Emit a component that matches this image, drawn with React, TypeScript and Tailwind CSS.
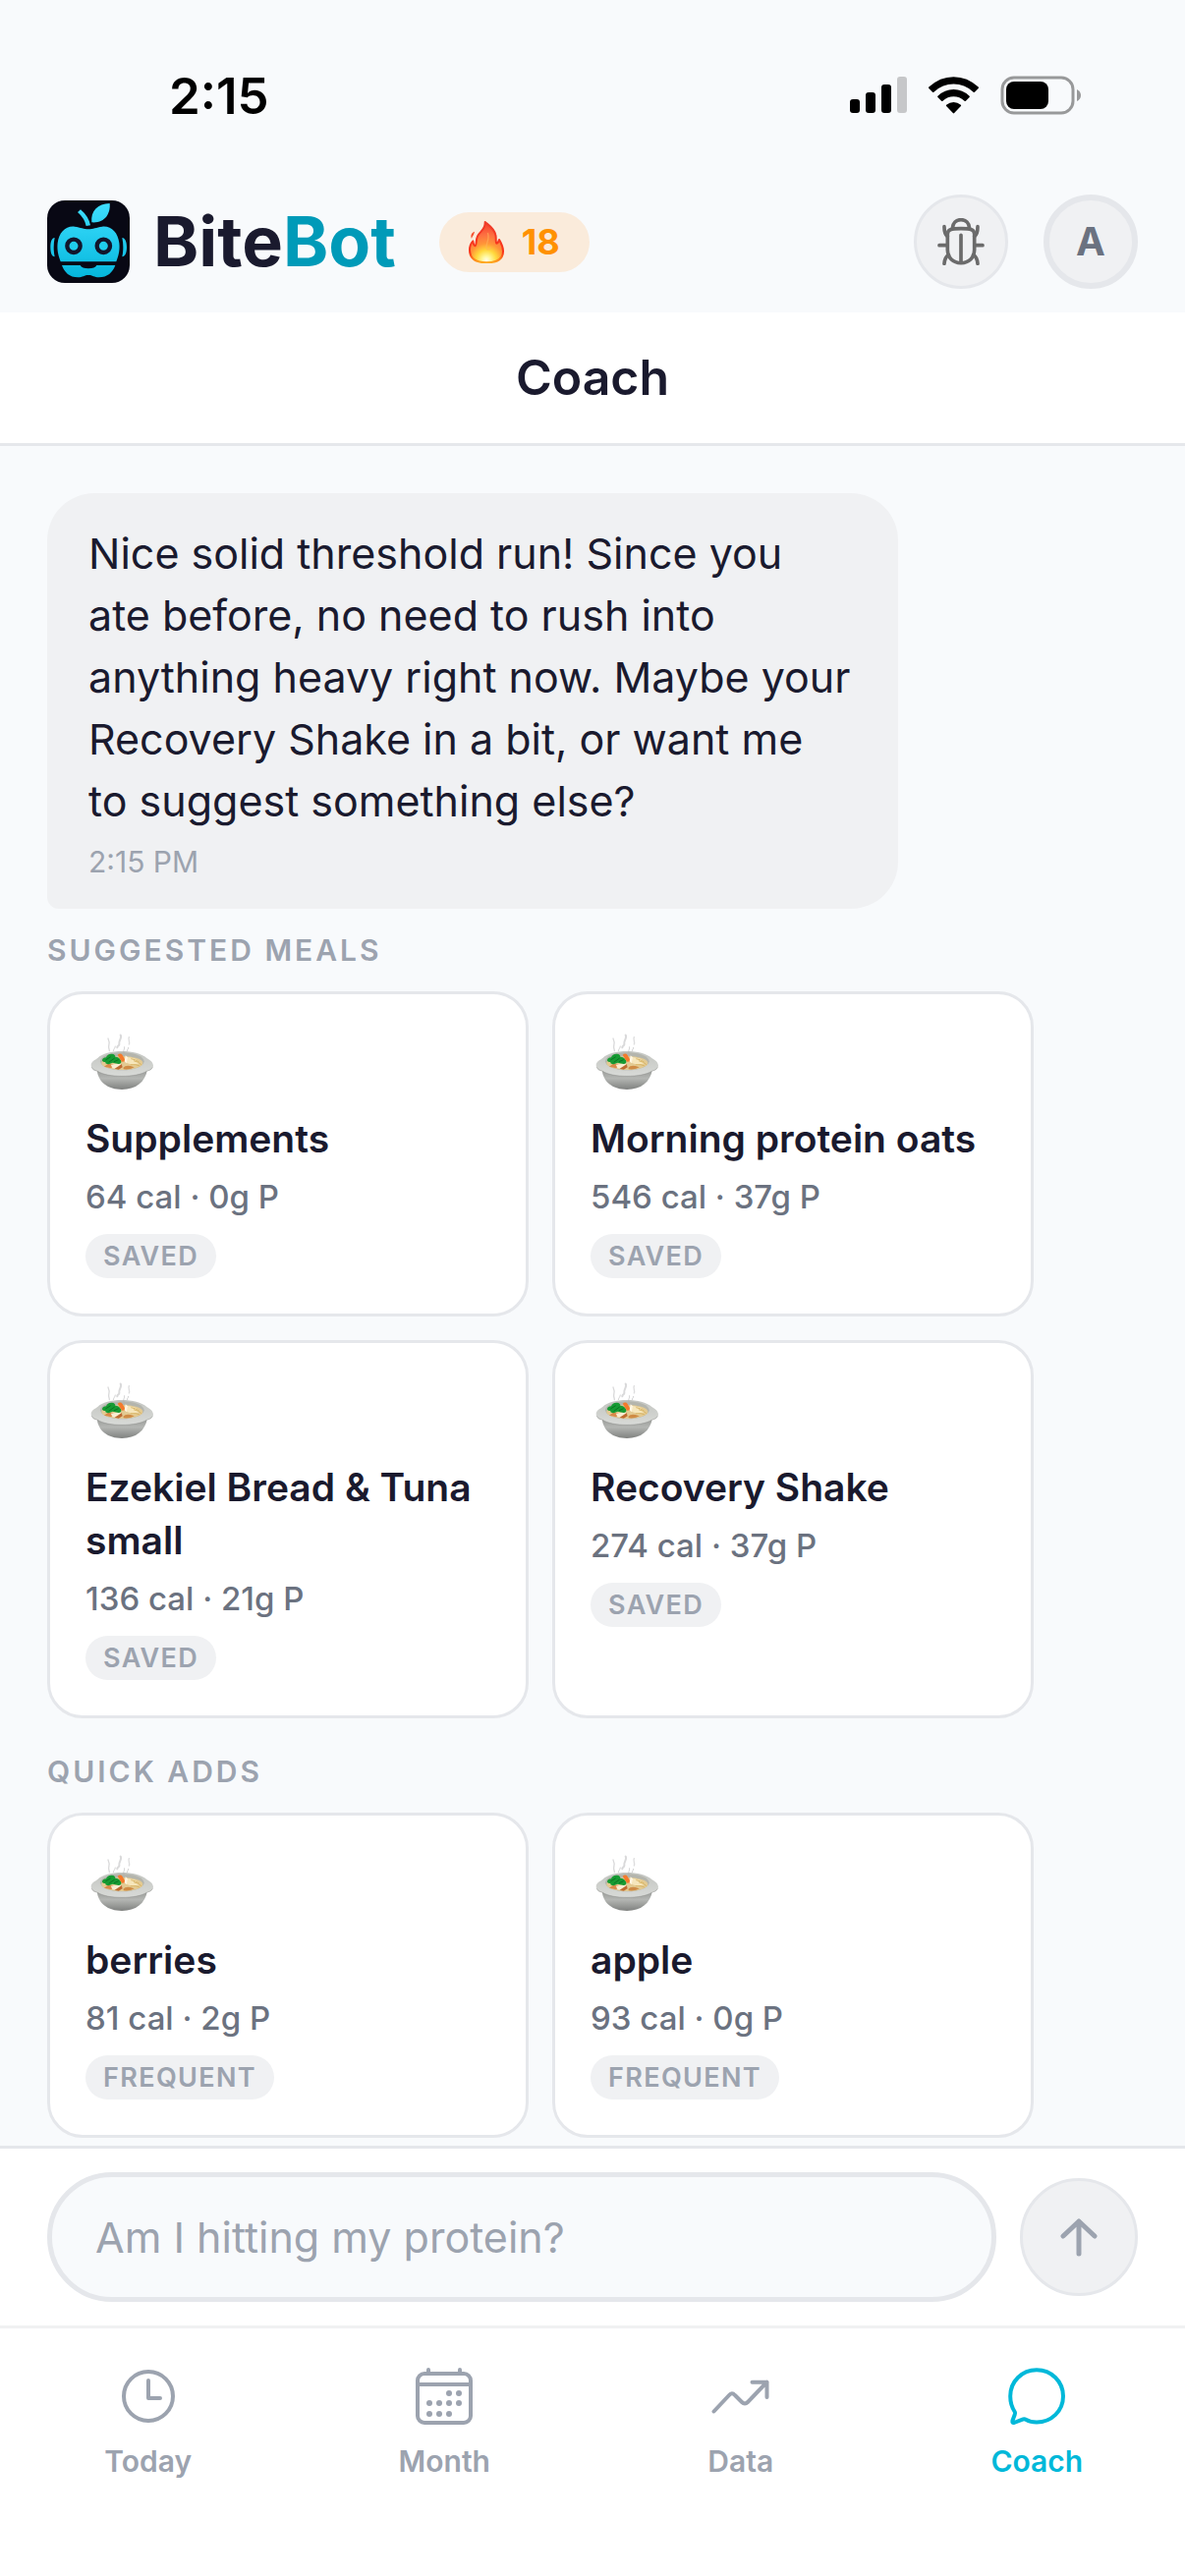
import React from "react";

type Meal = { name: string; cal: number; protein: number; tag: string };

const suggested: Meal[] = [
  { name: "Supplements", cal: 64, protein: 0, tag: "SAVED" },
  { name: "Morning protein oats", cal: 546, protein: 37, tag: "SAVED" },
  { name: "Ezekiel Bread & Tuna small", cal: 136, protein: 21, tag: "SAVED" },
  { name: "Recovery Shake", cal: 274, protein: 37, tag: "SAVED" },
];

const quickAdds: Meal[] = [
  { name: "berries", cal: 81, protein: 2, tag: "FREQUENT" },
  { name: "apple", cal: 93, protein: 0, tag: "FREQUENT" },
];

function StatusBar() {
  return (
    <div className="flex h-[174px] shrink-0 items-start justify-between pt-[72px] pr-[104px] pl-[172px]">
      <span className="text-[51px] leading-[52px] font-semibold text-black">2:15</span>
      <div className="flex h-[50px] items-center gap-[22px]">
        <svg width="58" height="38" viewBox="0 0 58 38" aria-label="Signal">
          <rect x="0" y="23" width="10" height="14" rx="3" />
          <rect x="16" y="16" width="10" height="21" rx="3" />
          <rect x="32" y="8" width="10" height="29" rx="3" />
          <rect x="48" y="0" width="10" height="37" rx="3" fill="#c6c7c9" />
        </svg>
        <svg width="51" height="38" viewBox="427 117 152 112" aria-label="Wi-Fi">
          <path d="M428 148Q461 117 503 117T578 148Q580 150 578 152L567 163Q565 165 563 163Q536 139 503 139T443 163Q441 165 439 163L428 152Q426 150 428 148Z" />
          <path d="M455 175Q476 155 503 155T551 175Q553 177 551 179L540 190Q538 192 536 190Q521 177 503 177T470 190Q468 192 466 190L455 179Q453 177 455 175Z" />
          <path d="M481 202Q491 194 503 194T525 202Q527 204 525 206L505 227Q503 229 501 227L481 206Q479 204 481 202Z" />
        </svg>
        <svg width="84" height="40" viewBox="0 0 84 40" aria-label="Battery">
          <rect x="2" y="2" width="72" height="36" rx="12" fill="none" stroke="#98999a" strokeWidth="3" />
          <rect x="6" y="6" width="43" height="28" rx="8" />
          <path d="M78 14Q82 16 82 20T78 26Z" fill="#98999a" />
        </svg>
      </div>
    </div>
  );
}

function Logo() {
  return (
    <svg width="84" height="84" viewBox="12 12 252 252" className="shrink-0" aria-hidden="true">
      <defs>
        <linearGradient id="apple" x1="0" y1="20" x2="0" y2="250" gradientUnits="userSpaceOnUse">
          <stop offset="0" stopColor="#3fdfff" />
          <stop offset="1" stopColor="#04b6dc" />
        </linearGradient>
      </defs>
      <rect x="12" y="12" width="252" height="252" rx="54" fill="#080814" />
      <g fill="url(#apple)">
        <path d="M105 48L114 40Q138 60 144 88L131 90Q126 66 105 48Z" />
        <path d="M203 21C206 52 188 82 148 79C144 44 166 22 203 21Z" />
        <path d="M53 199C44 175 42 160 44 142C48 110 68 89 96 92C114 94 124 100 138 100C152 100 162 94 180 92C208 89 228 110 232 142C234 160 232 175 223 199Z" />
        <path d="M57 210H113Q118 220 138 220T163 210H220C212 232 196 247 170 247C156 247 150 240 138 240S120 247 106 247C80 247 65 232 57 210Z" />
        <path d="M35 126C26 127 22 138 22 155S26 183 35 184C31 165 31 145 35 126Z" />
        <path d="M241 126C250 127 255 138 255 155S250 183 241 184C245 165 245 145 241 126Z" />
      </g>
      <g fill="#1fcdec" stroke="#12152b" strokeWidth="13">
        <circle cx="93" cy="151" r="20" />
        <circle cx="184" cy="151" r="20" />
      </g>
    </svg>
  );
}

function Flame() {
  return (
    <svg width="36" height="43" viewBox="114 60 108 129" className="shrink-0" aria-hidden="true">
      <defs>
        <radialGradient id="fire" cx="168" cy="180" r="112" gradientUnits="userSpaceOnUse">
          <stop offset="0" stopColor="#fffef0" />
          <stop offset="0.12" stopColor="#fff79a" />
          <stop offset="0.28" stopColor="#ffd83c" />
          <stop offset="0.46" stopColor="#ff9638" />
          <stop offset="0.7" stopColor="#fd6f42" />
          <stop offset="1" stopColor="#f6402c" />
        </radialGradient>
        <linearGradient id="fireEdge" x1="0" y1="60" x2="0" y2="189" gradientUnits="userSpaceOnUse">
          <stop offset="0" stopColor="#ee3c2a" />
          <stop offset="0.75" stopColor="#fa3418" />
          <stop offset="1" stopColor="#ffb020" />
        </linearGradient>
      </defs>
      <path
        d="M164 63C174 72 190 80 196 102C199 112 195 122 199 128C205 127 206 119 207 117C212 126 219 136 219 152C219 172 206 187 168 187S117 172 117 148C117 137 121 127 127 121C128 128 129 135 134 136C139 132 135 118 141 106C148 92 166 86 164 63Z"
        fill="url(#fire)"
        stroke="url(#fireEdge)"
        strokeWidth="6"
        strokeLinejoin="round"
      />
      <path d="M132 92C122 96 119 104 123 114C124 106 130 104 132 92Z" fill="#f5502e" />
      <path d="M172 96C180 116 166 126 168 142C170 150 178 148 182 140" fill="none" stroke="#ffb45c" strokeWidth="4" opacity="0.6" />
    </svg>
  );
}

function BugIcon() {
  return (
    <svg width="48" height="48" viewBox="453 545 144 144" fill="none" stroke="#6b6b6b" strokeWidth="11" strokeLinecap="round" strokeLinejoin="round" aria-hidden="true">
      <path d="M484 594C484 580 494 577 525 577S566 580 566 594V640C566 667 549 682 525 682S484 667 484 640Z" />
      <path d="M499 576C500 560 510 550 525 550S550 560 551 576" />
      <path d="M525 597V680M459 628H483M567 628H591" />
      <path d="M474 571C474 586 476 595 484 601M576 571C576 586 574 595 566 601" />
      <path d="M474 684C475 672 479 663 487 657M576 684C575 672 571 663 563 657" />
    </svg>
  );
}

function Bowl() {
  return (
    <svg width="72" height="72" viewBox="51 39 216 216" className="block" aria-hidden="true">
      <defs>
        <linearGradient id="bowlBody" x1="0" y1="160" x2="0" y2="222" gradientUnits="userSpaceOnUse">
          <stop offset="0" stopColor="#979996" />
          <stop offset="0.45" stopColor="#b4b6b3" />
          <stop offset="1" stopColor="#7f817f" />
        </linearGradient>
        <linearGradient id="bowlRim" x1="0" y1="105" x2="0" y2="180" gradientUnits="userSpaceOnUse">
          <stop offset="0" stopColor="#c3c5c1" />
          <stop offset="1" stopColor="#d8dad7" />
        </linearGradient>
      </defs>
      <path d="M86 160C88 200 120 222 162 222S234 200 240 160Z" fill="url(#bowlBody)" />
      <path d="M68 146C70 136 80 132 88 126C102 112 130 105 162 105S222 112 238 126C248 132 256 136 258 148C258 160 248 165 238 166C222 176 194 181 162 181S104 176 88 166C76 165 68 160 68 146Z" fill="url(#bowlRim)" />
      <path d="M70 154Q74 163 88 166C104 176 130 181 162 181S222 176 238 166Q252 163 256 154" fill="none" stroke="#858784" strokeWidth="2" opacity="0.6" />
      <ellipse cx="163" cy="136" rx="67" ry="27" fill="#b4b5ad" />
      <ellipse cx="163" cy="141" rx="63" ry="21" fill="#e3ca92" />
      <path d="M178 122L204 128L214 142L196 148L176 140Z" fill="#f6e6bb" />
      <path d="M198 134Q214 138 222 146M188 146Q206 144 216 150M190 128Q204 130 214 138" fill="none" stroke="#d9b668" strokeWidth="3" />
      <path d="M108 152L120 143L137 144L130 157Z" fill="#d98a4a" />
      <path d="M128 146L158 142L164 150L152 160L134 157Z" fill="#f8edd2" />
      <path d="M140 158L162 144L164 154L152 161Z" fill="#bd6a30" />
      <path d="M166 156Q172 147 188 150L200 154Q190 162 168 160Z" fill="#cf8b45" />
      <path d="M102 132Q104 124 114 124Q118 112 132 113Q142 114 142 122Q154 122 160 134Q162 142 152 144L134 140L122 145Q110 144 112 138Q102 138 102 132Z" fill="#169b33" />
      <path d="M112 132L128 122M122 139L140 126M138 137L152 131" stroke="#0b7423" strokeWidth="3" />
      <path d="M149 116Q158 109 164 117L174 136L162 137Z" fill="#f47a2c" />
      <path d="M173 118L180 124L176 142L170 136Z" fill="#fff6e2" />
      <g fill="none" stroke="#aaaaac" strokeLinecap="round">
        <path d="M120 66C124 74 126 78 122 90C121 96 124 98 124 104" strokeWidth="4" opacity="0.45" />
        <path d="M158 56C164 64 152 72 154 82C156 90 146 88 148 94" strokeWidth="6" opacity="0.45" />
        <path d="M184 62C180 70 188 76 184 84" strokeWidth="4" opacity="0.4" />
        <path d="M136 104C136 98 142 96 142 90M168 110C164 102 172 100 170 92M178 104C176 100 184 98 182 94" strokeWidth="3" opacity="0.5" />
      </g>
    </svg>
  );
}

function MealCard({ meal }: { meal: Meal }) {
  return (
    <button type="button" className="flex flex-col items-start justify-start rounded-[36px] border-[3px] border-[#e5e7eb] bg-white p-9 text-left">
      <Bowl />
      <span className="mt-3 text-[39px] leading-[54px] font-semibold text-[#1a1a2e]">{meal.name}</span>
      <span className="mt-3 text-[33px] leading-10 font-medium text-[#6b7280]">
        {meal.cal} cal · {meal.protein}g P
      </span>
      <span className="mt-[18px] rounded-full bg-[#f0f1f3] px-[18px] text-[27px] leading-[45px] font-semibold tracking-wider text-[#9ca3af]">
        {meal.tag}
      </span>
    </button>
  );
}

function MealSection({ title, meals, className }: { title: string; meals: Meal[]; className: string }) {
  return (
    <section className={className}>
      <h2 className="text-[30px] leading-9 font-semibold tracking-widest text-[#9ca3af]">{title}</h2>
      <div className="mt-6 mr-[106px] grid grid-cols-2 gap-6">
        {meals.map((m) => (
          <MealCard key={m.name} meal={m} />
        ))}
      </div>
    </section>
  );
}

const tabIcons: Record<string, React.ReactNode> = {
  Today: (
    <>
      <circle cx="30" cy="30" r="25" />
      <path d="M30 14V32H42" />
    </>
  ),
  Month: (
    <>
      <rect x="3" y="7" width="54" height="50" rx="7" />
      <path d="M3 18H57M14 3V7M46 3V7" />
      <g fill="currentColor" stroke="none">
        <circle cx="35" cy="27" r="3" />
        <circle cx="45" cy="27" r="3" />
        <circle cx="15" cy="37" r="3" />
        <circle cx="25" cy="37" r="3" />
        <circle cx="35" cy="37" r="3" />
        <circle cx="45" cy="37" r="3" />
        <circle cx="15" cy="48" r="3" />
        <circle cx="25" cy="48" r="3" />
        <circle cx="35" cy="48" r="3" />
      </g>
    </>
  ),
  Data: <path d="M2.5 45.5L18 29Q20.8 25.500 24 29L31 36Q34 39 37 36L56.500 15.700M41.500 15.700H56.500V31" />,
  Coach: (
    <path d="M7.800 46C4.500 41 3.200 36 3.200 30C3.200 15 15 3.300 30 3.300S57 15 57 30S45 56.500 30 56.500C25.500 56.500 22 55.500 19.500 54Q17.500 52.800 15 53.800L7 57Q5 57.500 5.400 55L7.800 48.500Q8.500 47.200 7.800 46Z" />
  ),
};

function TabBar() {
  return (
    <nav className="grid shrink-0 grid-cols-4 border-t-[3px] border-[#f0f1f2] bg-white pt-[39px] pb-[99px]">
      {Object.keys(tabIcons).map((name) => (
        <a
          key={name}
          href={`#${name.toLowerCase()}`}
          aria-current={name === "Coach" ? "page" : undefined}
          className={`flex flex-col items-center gap-[18px] ${name === "Coach" ? "text-[#00b8d9]" : "text-[#9ca3af]"}`}
        >
          <svg width="60" height="60" viewBox="0 0 60 60" fill="none" stroke="currentColor" strokeWidth="4" strokeLinecap="round" strokeLinejoin="round" aria-hidden="true">
            {tabIcons[name]}
          </svg>
          <span className="text-[30px] leading-9 font-semibold">{name}</span>
        </a>
      ))}
    </nav>
  );
}

export default function App() {
  return (
    <div className="flex h-screen flex-col bg-[#f8fafc] font-['Inter',sans-serif]">
      <StatusBar />
      <header className="flex shrink-0 items-center px-12 pt-6 pb-6">
        <Logo />
        <span className="ml-6 text-[70px] leading-[84px] font-bold text-[#1a1a2e]">
          Bite<span className="text-[#009ab8]">Bot</span>
        </span>
        <span className="ml-11 flex h-[61px] items-center gap-[18px] rounded-full bg-[#faebdb] px-[30px] text-[36px] font-bold text-[#ff9100]">
          <Flame />
          18
        </span>
        <div className="ml-auto flex gap-9">
          <button type="button" aria-label="Report a bug" className="flex size-24 items-center justify-center rounded-full border-[3px] border-[#e5e7eb] bg-[#f0f1f3]">
            <BugIcon />
          </button>
          <button type="button" aria-label="Account" className="flex size-24 items-center justify-center rounded-full border-[6px] border-[#e5e7eb] bg-[#f0f1f3] text-[40px] font-bold text-[#6b7280]">
            A
          </button>
        </div>
      </header>
      <h1 className="shrink-0 border-b-[3px] border-[#e5e7eb] bg-white py-9 text-center text-[50px] leading-[61px] font-semibold text-[#1a1a2e]">
        Coach
      </h1>
      <main className="min-h-0 flex-1 overflow-y-auto px-12 pt-12">
        <div className="w-[78%] rounded-[48px] rounded-bl-[12px] bg-[#f0f1f3] py-[30px] pr-12 pl-[42px]">
          <p className="text-[43px] leading-[63px] text-[#1a1a2e]">
            Nice solid threshold run! Since you ate before, no need to rush into anything heavy right now. Maybe your Recovery Shake in a bit, or want me to suggest something else?
          </p>
          <time className="mt-3 block text-[30px] leading-9 text-[#9ca3af]">2:15 PM</time>
        </div>
        <MealSection title="SUGGESTED MEALS" meals={suggested} className="mt-6" />
        <MealSection title="QUICK ADDS" meals={quickAdds} className="mt-9" />
      </main>
      <form className="flex shrink-0 items-center gap-6 border-t-[3px] border-[#e5e7eb] bg-white px-12 py-6" onSubmit={(e) => e.preventDefault()}>
        <input
          type="text"
          aria-label="Message"
          placeholder="Am I hitting my protein?"
          className="h-[132px] min-w-0 flex-1 rounded-full border-[5px] border-[#e5e7eb] bg-[#f8fafc] px-11 text-[43px] text-[#1a1a2e] outline-none placeholder:text-[#9ca3af]"
        />
        <button type="submit" aria-label="Send" className="flex size-[120px] shrink-0 items-center justify-center rounded-full border-[3px] border-[#e5e7eb] bg-[#f0f1f3]">
          <svg width="48" height="48" viewBox="0 0 48 48" fill="none" stroke="#9ca3af" strokeWidth="5" strokeLinecap="round" strokeLinejoin="round" aria-hidden="true">
            <path d="M24 41V8M8 23L24 8L40 23" />
          </svg>
        </button>
      </form>
      <TabBar />
    </div>
  );
}
